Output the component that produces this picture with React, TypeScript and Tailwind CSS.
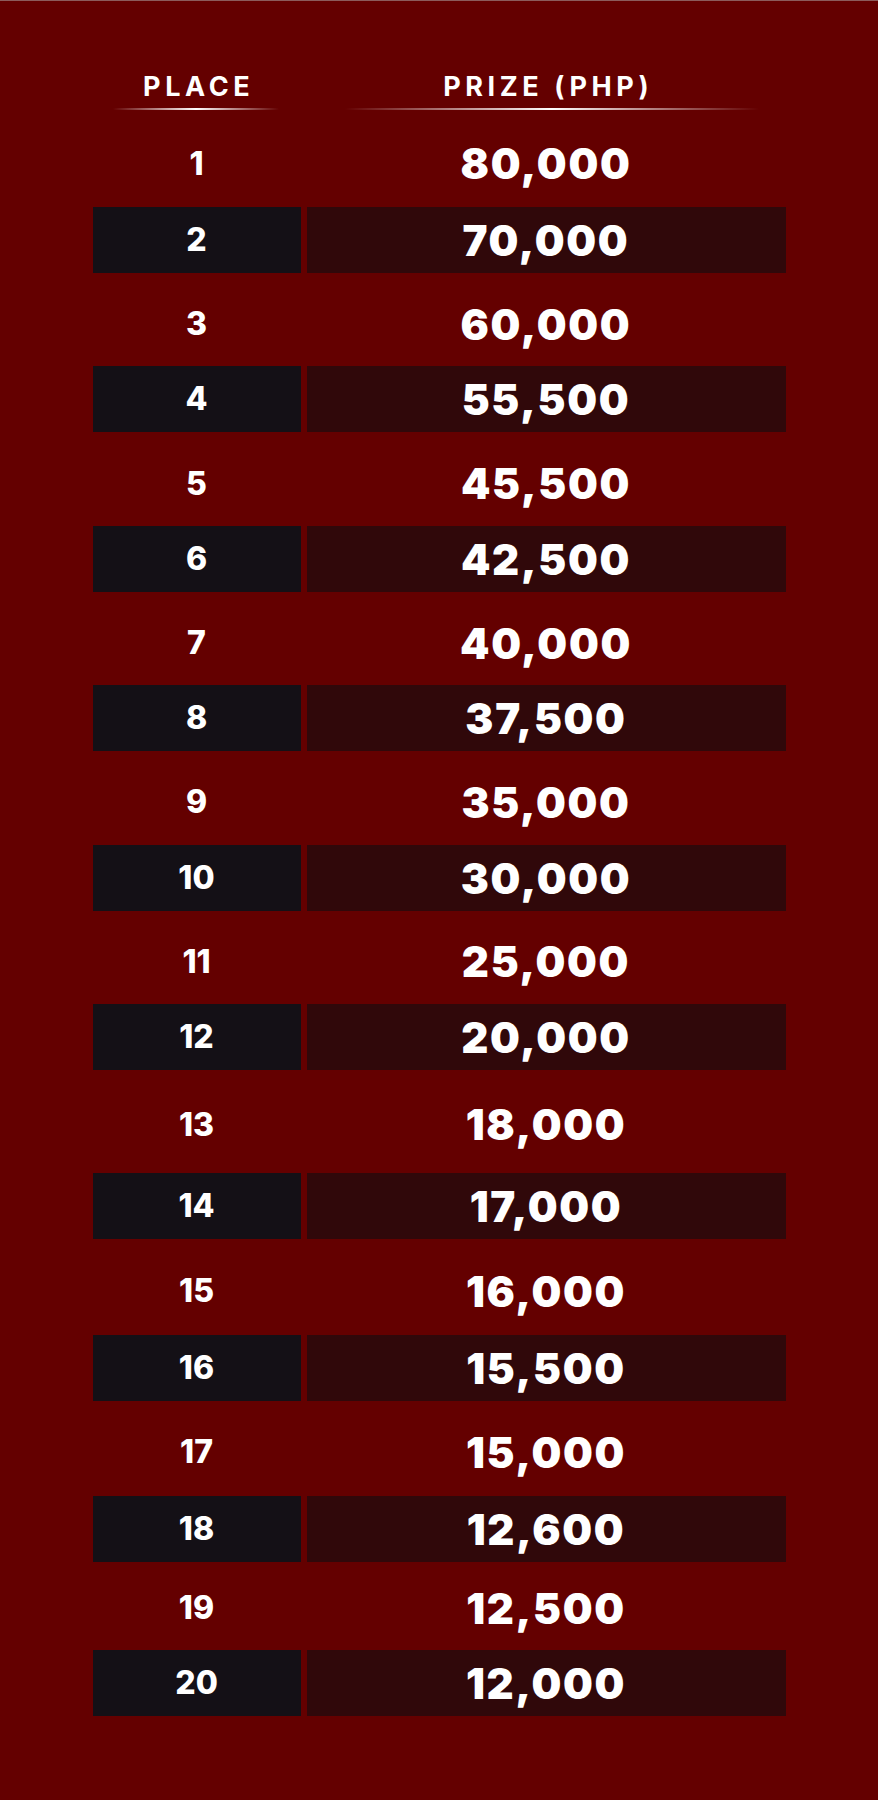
const prizes = [
  '80,000', '70,000', '60,000', '55,500', '45,500', '42,500', '40,000', '37,500', '35,000', '30,000',
  '25,000', '20,000', '18,000', '17,000', '16,000', '15,500', '15,000', '12,600', '12,500', '12,000',
];

// plain rows sit between the dark bars, their heights vary a little
const plainRows: Record<number, string> = {
  1: 'h-[97px] pt-[10px]',
  3: 'h-[93px] pt-[9px]',
  5: 'h-[94px] pt-[9px]',
  7: 'h-[93px] pt-[9px]',
  9: 'h-[94px] pt-[8px]',
  11: 'h-[93px] pt-[8px]',
  13: 'h-[103px] pt-[6px]',
  15: 'h-[96px] pt-[8px]',
  17: 'h-[95px] pt-[7px]',
  19: 'h-[88px] pt-[4px]',
};

const font = 'font-["Inter","Liberation_Sans",sans-serif]';

function PrizeRow({ place, prize }: { place: number; prize: string }) {
  const dark = place % 2 === 0;

  if (dark) {
    return (
      <div className="flex h-[66px] gap-[6px]">
        <div className="flex w-[208px] items-center justify-center bg-[#141016] text-[32px] font-extrabold text-white">
          {place}
        </div>
        <div className="flex flex-1 items-center justify-center bg-[#30080a] text-[42px] font-black tracking-[0.04em] text-white">
          {prize}
        </div>
      </div>
    );
  }

  return (
    <div className={`flex gap-[6px] ${plainRows[place]}`}>
      <div className="flex w-[208px] items-center justify-center text-[32px] font-extrabold text-white">
        {place}
      </div>
      <div className="flex flex-1 items-center justify-center text-[42px] font-black tracking-[0.04em] text-white">
        {prize}
      </div>
    </div>
  );
}

export default function App() {
  return (
    <div className={`h-[1800px] w-full border-t border-[#8c5c5c] bg-[#640000] ${font}`}>
      <div className="mx-auto w-[693px] pt-[70px]">
        {/* Header */}
        <div className="flex gap-[6px]">
          <div className="w-[208px]">
            <div className="pl-[0.16em] text-center text-[27px] leading-[32px] font-bold tracking-[0.17em] text-white">PLACE</div>
            <div className="mt-[5px] ml-[20px] h-[2px] w-[166px] bg-linear-to-r from-transparent via-white to-transparent" />
          </div>
          <div className="flex-1">
            <div className="pl-[0.16em] text-center text-[27px] leading-[32px] font-bold tracking-[0.17em] text-white">PRIZE (PHP)</div>
            <div className="mt-[5px] ml-[38px] h-[2px] w-[414px] bg-linear-to-r from-transparent via-white to-transparent" />
          </div>
        </div>

        {/* Rows */}
        <div className="flex flex-col">
          {prizes.map((prize, i) => (
            <PrizeRow key={i} place={i + 1} prize={prize} />
          ))}
        </div>
      </div>
    </div>
  );
}
